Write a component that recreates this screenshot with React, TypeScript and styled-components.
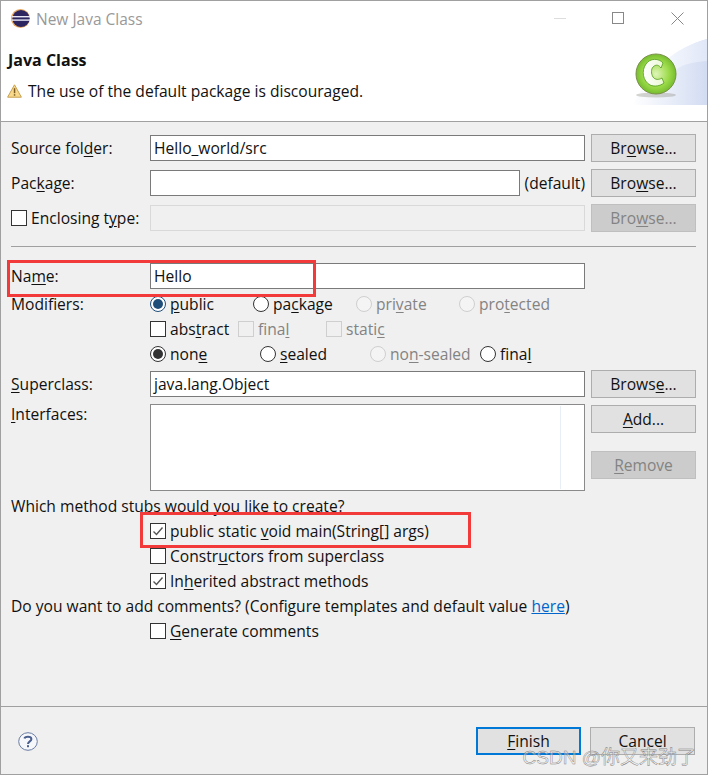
import React from "react";
import styled, { createGlobalStyle } from "styled-components";

const GlobalStyle = createGlobalStyle`
  html, body {
    margin: 0;
    padding: 0;
    background: #f0f0f0;
  }
  u {
    text-underline-offset: 2px;
    text-decoration-thickness: 1px;
  }
`;

const Dialog = styled.div`
  position: relative;
  box-sizing: border-box;
  width: 708px;
  height: 775px;
  display: flex;
  flex-direction: column;
  border: 1px solid #a0a0a0;
  background: #f0f0f0;
  color: #111;
  font-family: "Open Sans", "Noto Sans", sans-serif;
  font-size: 15.6px;
  overflow: hidden;
`;

const TitleBar = styled.div`
  height: 35px;
  padding-bottom: 2px;
  display: flex;
  align-items: center;
  padding-left: 10px;
  background: #fff;
`;

const TitleText = styled.span`
  margin-left: 6px;
  color: #999;
  font-size: 15.5px;
`;

const WindowButtons = styled.div`
  margin-left: auto;
  display: flex;
  align-items: center;
  margin-right: 23px;
  gap: 46px;
`;

const Banner = styled.div`
  height: 83px;
  display: flex;
  align-items: flex-start;
  justify-content: space-between;
  background: #fff;
  border-bottom: 1px solid #a0a0a0;
`;

const BannerText = styled.div`
  padding: 11px 0 0 7px;
`;

const BannerTitle = styled.div`
  font-weight: 700;
  font-size: 16px;
  line-height: 22px;
`;

const BannerMessage = styled.div`
  display: flex;
  align-items: center;
  gap: 6px;
  margin: 8px 0 0 -1px;
  line-height: 24px;
`;

const Content = styled.div`
  flex: 1;
  display: flex;
  flex-direction: column;
  padding: 12px 11px 0 10px;
`;

const FieldRow = styled.div<{ $mt?: number }>`
  display: grid;
  grid-template-columns: 133px 1fr 105px;
  column-gap: 6px;
  height: 28px;
  align-items: center;
  margin-top: ${(p) => p.$mt ?? 0}px;
`;

const Label = styled.label`
  display: flex;
  align-items: center;
  gap: 4px;
  line-height: 25px;
`;

const Field = styled.div<{ $disabled?: boolean }>`
  box-sizing: border-box;
  height: 26px;
  padding-left: 3px;
  line-height: 24px;
  border: 1px solid ${(p) => (p.$disabled ? "#d9d9d9" : "#7a7a7a")};
  background: ${(p) => (p.$disabled ? "#f0f0f0" : "#fff")};
  flex: 1;
`;

const FieldWithSuffix = styled.div`
  display: flex;
  align-items: center;
  gap: 5px;
`;

const Button = styled.button<{ $disabled?: boolean; $focused?: boolean }>`
  box-sizing: border-box;
  width: 105px;
  height: 28px;
  padding: 0;
  font: inherit;
  line-height: 24px;
  text-align: center;
  color: ${(p) => (p.$disabled ? "#838383" : "#111")};
  background: ${(p) => (p.$disabled ? "#ccc" : "#e1e1e1")};
  border: ${(p) =>
    p.$focused
      ? "2px solid #0078d7"
      : `1px solid ${p.$disabled ? "#bfbfbf" : "#adadad"}`};
`;

const Separator = styled.div`
  height: 1px;
  margin: 14px 0 15px;
  background: #a0a0a0;
`;

const OptionRows = styled.div`
  margin: 1px 0 4px;
`;

const OptionRow = styled.div<{ $indent?: boolean }>`
  display: flex;
  height: 25px;
  align-items: center;
  padding-left: ${(p) => (p.$indent ? 139 : 0)}px;
`;

const RowLabel = styled.div`
  width: 139px;
  flex: none;
`;

const OptionItem = styled.label<{ $width?: number; $disabled?: boolean }>`
  display: flex;
  align-items: center;
  gap: 4px;
  flex: none;
  width: ${(p) => (p.$width ? `${p.$width}px` : "auto")};
  color: ${(p) => (p.$disabled ? "#838383" : "inherit")};
`;

const Box = styled.span<{ $disabled?: boolean }>`
  box-sizing: border-box;
  display: flex;
  align-items: center;
  justify-content: center;
  flex: none;
  width: 16px;
  height: 16px;
  border: 1px solid ${(p) => (p.$disabled ? "#cfcfcf" : "#333")};
  background: ${(p) => (p.$disabled ? "#f0f0f0" : "#fff")};
`;

const Circle = styled.span<{ $disabled?: boolean; $tone?: string }>`
  box-sizing: border-box;
  display: flex;
  align-items: center;
  justify-content: center;
  flex: none;
  width: 16px;
  height: 16px;
  border-radius: 50%;
  border: 1px solid ${(p) => (p.$disabled ? "#cfcfcf" : p.$tone ?? "#333")};
  background: ${(p) => (p.$disabled ? "#f4f4f4" : "#fff")};
  &::after {
    content: "";
    display: ${(p) => (p.$tone ? "block" : "none")};
    width: 10px;
    height: 10px;
    border-radius: 50%;
    background: ${(p) => p.$tone};
  }
`;

const InterfacesRow = styled.div`
  display: grid;
  grid-template-columns: 133px 1fr 105px;
  column-gap: 6px;
  height: 87px;
  margin-top: 6px;
`;

const InterfacesLabel = styled.div`
  line-height: 21px;
`;

const ListBox = styled.div`
  box-sizing: border-box;
  border: 1px solid #8a8a8a;
  background: #fff;
  display: flex;
  justify-content: flex-end;
  padding: 1px 0;
`;

const ListTrack = styled.div`
  width: 23px;
  border-left: 1px solid #e8eef6;
`;

const ButtonColumn = styled.div`
  display: flex;
  flex-direction: column;
  gap: 18px;
  padding-top: 1px;
`;

const StubRows = styled.div`
  margin-top: 2px;
`;

const Link = styled.a`
  color: #0066cc;
  text-decoration: underline;
`;

const Footer = styled.div`
  box-sizing: border-box;
  height: 68px;
  display: flex;
  align-items: flex-start;
  padding: 20px 12px 0 17px;
  border-top: 1px solid #a0a0a0;
`;

const FooterButtons = styled.div`
  margin-left: auto;
  display: flex;
  gap: 9px;
`;

const HelpIcon = styled.svg`
  margin-top: 5px;
`;

const Callout = styled.div<{ $x: number; $y: number; $w: number; $h: number }>`
  position: absolute;
  box-sizing: border-box;
  left: ${(p) => p.$x}px;
  top: ${(p) => p.$y}px;
  width: ${(p) => p.$w}px;
  height: ${(p) => p.$h}px;
  border: 3px solid #f33a3a;
  pointer-events: none;
`;

const Watermark = styled.div`
  position: absolute;
  right: 11px;
  bottom: 4px;
  font-family: "Liberation Sans", "Noto Sans CJK SC", sans-serif;
  font-size: 19px;
  line-height: 24px;
  color: rgba(255, 255, 255, 0.4);
  -webkit-text-stroke: 0.45px #808080;
`;

const EclipseIcon = () => (
  <svg width="19" height="19" viewBox="0 0 19 19">
    <circle cx="9.5" cy="9.5" r="9.5" fill="#e8a860" />
    <circle cx="10" cy="9.5" r="8.6" fill="#2c2560" />
    <rect x="1" y="7" width="18" height="1.4" fill="#e8e6f2" />
    <rect x="1" y="10.4" width="18" height="1.4" fill="#e8e6f2" />
  </svg>
);

const WindowIcons = () => (
  <WindowButtons>
    <svg width="12" height="12" viewBox="0 0 12 12">
      <path d="M0 5.5H12" stroke="#ddd" strokeWidth="1" />
    </svg>
    <svg width="13" height="13" viewBox="0 0 13 13">
      <rect x="0.5" y="0.5" width="11" height="11" fill="none" stroke="#888" strokeWidth="1" />
    </svg>
    <svg width="13" height="13" viewBox="0 0 13 13">
      <path d="M0.5 0.5L12.5 12.5M12.5 0.5L0.5 12.5" stroke="#888" strokeWidth="1" />
    </svg>
  </WindowButtons>
);

const WarningIcon = () => (
  <svg width="15" height="14" viewBox="0 0 15 14">
    <path
      d="M7.5 0.8L14.4 13.2H0.6Z"
      fill="#f8d98c"
      stroke="#c8a050"
      strokeWidth="1"
      strokeLinejoin="round"
    />
    <rect x="6.8" y="4.2" width="1.5" height="5" fill="#7a5a20" />
    <rect x="6.8" y="10.2" width="1.5" height="1.5" fill="#7a5a20" />
  </svg>
);

const ClassBadge = () => (
  <svg width="75" height="67" viewBox="0 0 75 67">
    <defs>
      <linearGradient id="wash" x1="0" y1="0" x2="1" y2="0">
        <stop offset="0" stopColor="#ffffff" />
        <stop offset="1" stopColor="#d2dcf2" />
      </linearGradient>
      <linearGradient id="washTop" x1="0" y1="0" x2="1" y2="0">
        <stop offset="0" stopColor="#f4f7fd" />
        <stop offset="1" stopColor="#e0e7f7" />
      </linearGradient>
      <radialGradient id="ball" cx="0.5" cy="0.5" r="0.55">
        <stop offset="0" stopColor="#dff5b8" />
        <stop offset="0.6" stopColor="#9ada48" />
        <stop offset="1" stopColor="#6cb428" />
      </radialGradient>
      <linearGradient id="glyph" x1="0" y1="0" x2="1" y2="0">
        <stop offset="0" stopColor="#ffffff" />
        <stop offset="1" stopColor="#eaf8d2" />
      </linearGradient>
    </defs>
    <path d="M0 67C14 42 36 12 75 1V67Z" fill="url(#wash)" />
    <path d="M34 22C46 12 60 5 75 1V23C62 24 50 26 44 32Z" fill="url(#washTop)" />
    <ellipse cx="24" cy="57" rx="20" ry="2.5" fill="#8a8a7a" opacity="0.35" />
    <circle cx="24" cy="36" r="20" fill="url(#ball)" stroke="#7b8f4a" strokeWidth="1" />
    <path
      d="M31 25C27 20 18 20 14 26C9 33 11 43 18 47C23 49 28 48 32 45L30 40C27 42 23 42 21 39C19 36 19 31 21 29C24 26 27 27 29 30Z"
      fill="url(#glyph)"
      stroke="#4f9a18"
      strokeWidth="0.8"
    />
  </svg>
);

const CheckMark = () => (
  <svg width="14" height="14" viewBox="0 0 14 14">
    <path d="M2.5 7.5L5.5 10.5L11.5 3.5" fill="none" stroke="#555" strokeWidth="1.4" />
  </svg>
);

const Help = () => (
  <HelpIcon width="20" height="19" viewBox="0 0 20 19">
    <ellipse cx="10" cy="9.5" rx="9.3" ry="8.8" fill="#f6f7fb" stroke="#6a7ca3" strokeWidth="1" />
    <path
      d="M6.5 6.5C6.8 4.2 13.2 3.9 13.4 7C13.5 9.3 10 9.4 10 12"
      fill="none"
      stroke="#4a5f8e"
      strokeWidth="2"
    />
    <rect x="9" y="13.2" width="2" height="2" fill="#4a5f8e" />
  </HelpIcon>
);

interface OptionProps {
  width?: number;
  disabled?: boolean;
  checked?: boolean;
  children: React.ReactNode;
}

const Check: React.FC<OptionProps> = ({ width, disabled, checked, children }) => (
  <OptionItem $width={width} $disabled={disabled}>
    <Box $disabled={disabled}>{checked && <CheckMark />}</Box>
    <span>{children}</span>
  </OptionItem>
);

const Radio: React.FC<OptionProps & { tone?: string }> = ({ width, disabled, tone, children }) => (
  <OptionItem $width={width} $disabled={disabled}>
    <Circle $disabled={disabled} $tone={tone} />
    <span>{children}</span>
  </OptionItem>
);

export default function App() {
  return (
    <>
      <GlobalStyle />
      <Dialog>
        <TitleBar>
          <EclipseIcon />
          <TitleText>New Java Class</TitleText>
          <WindowIcons />
        </TitleBar>
        <Banner>
          <BannerText>
            <BannerTitle>Java Class</BannerTitle>
            <BannerMessage>
              <WarningIcon />
              The use of the default package is discouraged.
            </BannerMessage>
          </BannerText>
          <ClassBadge />
        </Banner>
        <Content>
          <FieldRow>
            <Label>
              <span>
                Source fol<u>d</u>er:
              </span>
            </Label>
            <Field>Hello_world/src</Field>
            <Button>
              Br<u>o</u>wse...
            </Button>
          </FieldRow>
          <FieldRow $mt={7}>
            <Label>
              <span>
                Pac<u>k</u>age:
              </span>
            </Label>
            <FieldWithSuffix>
              <Field />
              <span>(default)</span>
            </FieldWithSuffix>
            <Button>
              Bro<u>w</u>se...
            </Button>
          </FieldRow>
          <FieldRow $mt={7}>
            <Label>
              <Box />
              <span>
                Enclosing t<u>y</u>pe:
              </span>
            </Label>
            <Field $disabled />
            <Button $disabled>
              Bro<u>w</u>se...
            </Button>
          </FieldRow>
          <Separator />
          <FieldRow>
            <Label>
              <span>
                Na<u>m</u>e:
              </span>
            </Label>
            <Field>Hello</Field>
          </FieldRow>
          <OptionRows>
            <OptionRow>
              <RowLabel>Modifiers:</RowLabel>
              <Radio width={103} tone="#1f4e79">
                <u>p</u>ublic
              </Radio>
              <Radio width={103}>
                pa<u>c</u>kage
              </Radio>
              <Radio width={103} disabled>
                pri<u>v</u>ate
              </Radio>
              <Radio disabled>
                pro<u>t</u>ected
              </Radio>
            </OptionRow>
            <OptionRow $indent>
              <Check width={88}>
                abs<u>t</u>ract
              </Check>
              <Check width={88} disabled>
                fina<u>l</u>
              </Check>
              <Check disabled>
                stati<u>c</u>
              </Check>
            </OptionRow>
            <OptionRow $indent>
              <Radio width={110} tone="#333">
                non<u>e</u>
              </Radio>
              <Radio width={110}>
                <u>s</u>ealed
              </Radio>
              <Radio width={110} disabled>
                no<u>n</u>-sealed
              </Radio>
              <Radio>
                fina<u>l</u>
              </Radio>
            </OptionRow>
          </OptionRows>
          <FieldRow>
            <Label>
              <span>
                <u>S</u>uperclass:
              </span>
            </Label>
            <Field>java.lang.Object</Field>
            <Button>
              Brows<u>e</u>...
            </Button>
          </FieldRow>
          <InterfacesRow>
            <InterfacesLabel>
              <u>I</u>nterfaces:
            </InterfacesLabel>
            <ListBox>
              <ListTrack />
            </ListBox>
            <ButtonColumn>
              <Button>
                <u>A</u>dd...
              </Button>
              <Button $disabled>
                <u>R</u>emove
              </Button>
            </ButtonColumn>
          </InterfacesRow>
          <StubRows>
            <OptionRow>Which method stubs would you like to create?</OptionRow>
            <OptionRow $indent>
              <Check checked>
                public static <u>v</u>oid main(String[] args)
              </Check>
            </OptionRow>
            <OptionRow $indent>
              <Check>
                Constr<u>u</u>ctors from superclass
              </Check>
            </OptionRow>
            <OptionRow $indent>
              <Check checked>
                In<u>h</u>erited abstract methods
              </Check>
            </OptionRow>
            <OptionRow>
              <span>
                Do you want to add comments? (Configure templates and default value{" "}
                <Link>here</Link>)
              </span>
            </OptionRow>
            <OptionRow $indent>
              <Check>
                <u>G</u>enerate comments
              </Check>
            </OptionRow>
          </StubRows>
        </Content>
        <Footer>
          <Help />
          <FooterButtons>
            <Button $focused>
              <u>F</u>inish
            </Button>
            <Button>Cancel</Button>
          </FooterButtons>
        </Footer>
        <Callout $x={6} $y={259} $w={309} $h={37} />
        <Callout $x={139} $y={511} $w={331} $h={36} />
        <Watermark>CSDN @你又来劲了</Watermark>
      </Dialog>
    </>
  );
}
